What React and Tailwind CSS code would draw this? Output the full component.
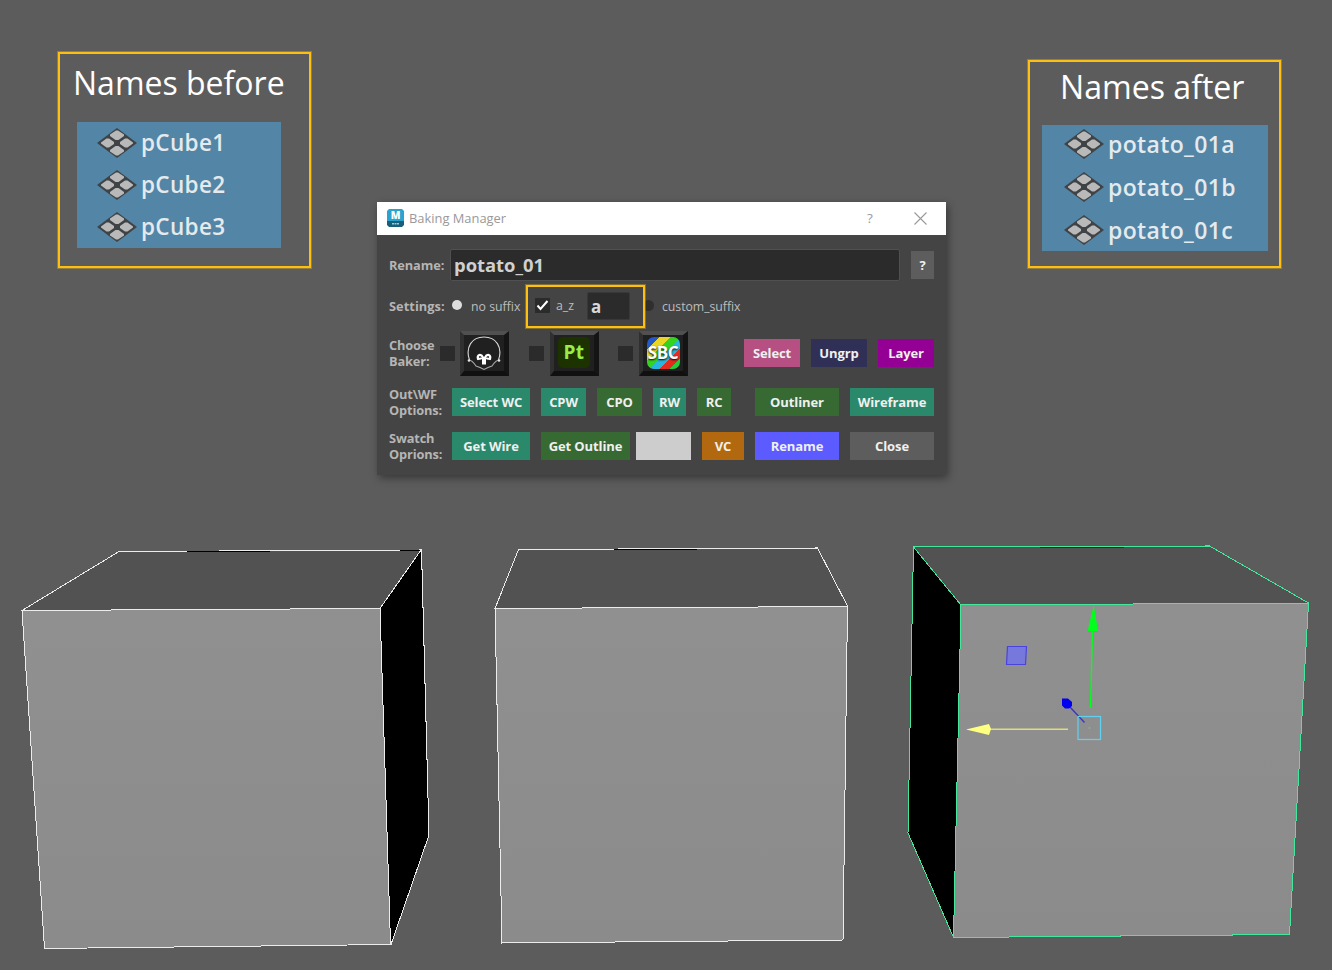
function PolyIcon() {
  return (
    <svg className="h-[30px] w-[42px] shrink-0" viewBox="0 0 42 30">
      <path d="M21 0 L41 15 L21 30 L1 15 Z" fill="#404346" />
      <g fill="#b9b9b9">
        <path d="M20 2.500 h2 l6 4 v1.500 l-5.500 4 h-3 l-5.500 -4 V6.500 Z" />
        <path d="M20 27.500 h2 l6 -4 v-1.500 l-5.500 -4 h-3 l-5.500 4 V23.500 Z" />
        <path d="M5 14.500 l5.500 -4 h2.500 l5 3.500 v2 l-5 3.500 h-2.500 l-5.500 -4 Z" />
        <path d="M37 14.500 l-5.500 -4 h-2.500 l-5 3.500 v2 l5 3.500 h2.500 l5.500 -4 Z" />
      </g>
    </svg>
  );
}

function OutlinerRow({ name, className }) {
  return (
    <div className={"flex items-center " + className}>
      <PolyIcon />
      <span className="ml-[3px] font-semibold leading-none tracking-[0.35px] text-[#e4eaed]">{name}</span>
    </div>
  );
}

function Face({ points, fill }) {
  return <polygon points={points} fill={fill} />;
}

function Viewport() {
  return (
    <svg className="absolute inset-0 h-[970px] w-[1332px]" viewBox="0 0 1332 970">
      <defs>
        <linearGradient id="front" x1="0" y1="0" x2="0" y2="1">
          <stop offset="0" stopColor="#909090" />
          <stop offset="1" stopColor="#8b8b8b" />
        </linearGradient>
      </defs>

      <g shapeRendering="crispEdges">
        <Face points="22,611 119,551.5 421,550 380,608.500" fill="#525252" />
        <Face points="380,608.500 421,550 429,835 391,944" fill="#000" />
        <Face points="22,611 380,608.500 391,944 44.500,948.500" fill="url(#front)" />
        <g fill="none" stroke="#ececec" strokeWidth="1">
          <path d="M22 610.500 L119 551.500 L421.500 550 L429 835 L391 944.500 L44.500 948.500 Z" />
          <path d="M22 610.500 L380 608.500 L421 550 M380 608.500 L390.500 944" />
        </g>
        <path d="M187 551.500 H270 M400 550.500 H420" stroke="#000" strokeWidth="1" />

        <Face points="518.500,549 817.500,548 847.500,606 495,608.500" fill="#525252" />
        <Face points="495,608.500 847.500,606 843,940 502,943.500" fill="url(#front)" />
        <g fill="none" stroke="#ececec" strokeWidth="1">
          <path d="M518.500 549.500 L817.500 548 L847.500 606 L843 940 L502 943 L495 608.500 Z" />
          <path d="M495 608.500 L847.500 606.500" />
        </g>
        <path d="M614 549.500 H697" stroke="#000" strokeWidth="1" />

        <Face points="913.500,547 1209.500,546 1308.500,603 961,605" fill="#525252" />
        <Face points="913.500,547 961,605 953.500,937.500 908,833" fill="#000" />
        <Face points="961,605 1308.500,603 1289,934 953.500,937.500" fill="url(#front)" />
        <g fill="none" stroke="#43e89d" strokeWidth="1">
          <path d="M913.500 547 L1209.500 546 L1308.500 603 L1289.500 934.500 L953.500 937.500 L908 833 Z" />
          <path d="M913.500 547 L961 605 L1308.500 603 M961 605 L953.500 937.500" />
        </g>
        <path d="M1040 547 H1124" stroke="#04301d" strokeWidth="1" />
      </g>

      <path d="M1090.500 708 L1092.500 630" stroke="#00ff1a" strokeWidth="1.400" />
      <path d="M1093.800 605 L1098 631 H1087.500 Z" fill="#00ff1a" />
      <path d="M1068 729.300 H989" stroke="#e0dc7c" strokeWidth="1.500" />
      <path d="M966 729.500 L989 724 L991 729 L989 735 Z" fill="#ffff80" />
      <path d="M1007.500 646.500 H1026.500 L1025.500 664.500 H1006.500 Z" fill="#7778dc" stroke="#4a44dc" strokeWidth="1.200" />
      <path d="M1069 706 L1084.500 722.500" stroke="#3c34c0" strokeWidth="1.400" />
      <path d="M1062 698.500 H1068 L1072 702 V706 L1069 708.500 H1065 L1062 705.500 Z" fill="#0000f0" />
      <rect x="1078" y="716.500" width="22.500" height="23" fill="none" stroke="#5ed2f0" strokeWidth="1.200" />
      <circle cx="1089.500" cy="728" r="1" fill="#7ab59a" />
    </svg>
  );
}

function Btn({ children, className }) {
  return (
    <button className={"flex h-7 shrink-0 items-center justify-center whitespace-nowrap text-[13px] font-bold leading-none tracking-[-0.1px] text-[#f0f0f0] " + className}>
      {children}
    </button>
  );
}

function RowLabel({ a, b }) {
  return (
    <div className="w-[63px] shrink-0 text-[12.800px] font-bold leading-[16.500px] tracking-[-0.15px] text-[#b5b5b5]">
      <div>{a}</div>
      <div>{b}</div>
    </div>
  );
}

function Check() {
  return <div className="size-[15px] shrink-0 bg-[#2b2b2b]" />;
}

function BakerTile({ children }) {
  return (
    <div className="flex h-[45px] w-[49px] shrink-0 items-center justify-center border-b-[5px] border-l-4 border-r-[5px] border-t-4 border-b-[#101010] border-l-[#303030] border-r-[#141414] border-t-[#505050] bg-[#202020]">
      {children}
    </div>
  );
}

function Skull() {
  return (
    <svg className="h-9 w-9 shrink-0" viewBox="0 0 36 36" fill="none">
      <path d="M3.500 25 C-1 12 6 2 18 2 C30 2 37 12 32.500 25" stroke="#d8d8d8" strokeWidth="1.100" />
      <path d="M3 25 C6 25 8 28 10 31 L14 32.500 L18 34.500 L22 32.500 L26 31 C28 28 30 25 33 25" stroke="#a8a8a8" strokeWidth="1.100" />
      <circle cx="3" cy="25.500" r="1.300" fill="#e5e5e5" />
      <circle cx="33" cy="25.500" r="1.300" fill="#e5e5e5" />
      <path d="M12 24 C10.500 19.500 15 18.500 17 22.500 M24 24 C25.500 19.500 21 18.500 19 22.500 M12 24 L15 23.500 M24 24 L21 23.500" stroke="#fff" strokeWidth="2.200" strokeLinecap="round" />
      <path d="M16 22 H20 V29.500 H16 Z" fill="#fff" />
    </svg>
  );
}

function Dialog() {
  return (
    <div className="absolute left-[377px] top-[202px] flex h-[273px] w-[569px] flex-col bg-[#444] shadow-[2px_3px_8px_rgba(0,0,0,0.400)]">
      <div className="flex h-[33px] shrink-0 items-center bg-white pl-[10px] text-[#999]">
        <svg className="mb-[1px] h-[18px] w-[17px] shrink-0" viewBox="0 0 17 18">
          <path d="M2 0 H15 L17 2 V12 H0 V2 Z" fill="#28a4cf" />
          <path d="M0 12 H17 V16 L15 18 H2 L0 16 Z" fill="#17607c" />
          <text x="8.500" y="10" fill="#fff" fontSize="10" fontWeight="800" textAnchor="middle">M</text>
          <path d="M5 14.800 H12" stroke="#9fc8d6" strokeWidth="1.500" strokeDasharray="2 .5" />
        </svg>
        <span className="ml-[5px] w-[458px] shrink-0 text-[12.900px]">Baking Manager</span>
        <span className="w-[10px] shrink-0 text-[13.500px]">?</span>
        <svg className="ml-[37px] size-[13px] shrink-0" viewBox="0 0 13 13" stroke="#999" strokeWidth="1.100"><path d="M.5 .5 L12.500 12.500 M12.500 .5 L.5 12.500" /></svg>
      </div>

      <div className="mt-[14px] flex h-8 shrink-0 items-center pl-3">
        <span className="w-[61px] shrink-0 pt-[1px] text-[12.800px] font-bold tracking-[-0.1px] text-[#b5b5b5]">Rename:</span>
        <div className="flex h-8 w-[450px] shrink-0 items-center rounded-[2px] border border-[#505050] bg-[#2b2b2b] pl-[3px] text-[18.400px] font-bold text-[#d0d0d0]">potato_01</div>
        <Btn className="ml-[11px] w-[23px] bg-[#5d5d5d]">?</Btn>
      </div>

      <div className="mt-[3px] flex h-[44px] shrink-0 items-center pl-3 text-[12.300px] text-[#bdbdbd]">
        <span className="w-[63px] shrink-0 pt-[2px] text-[12.800px] font-bold tracking-[0.05px] text-[#b5b5b5]">Settings:</span>
        <div className="mb-[2px] size-[10px] shrink-0 rounded-full bg-[#dedede]" />
        <span className="ml-[9px] w-[54px] shrink-0 whitespace-nowrap pt-[2px]">no suffix</span>
        <div className="z-10 mx-[1px] flex h-[43px] w-[119px] shrink-0 items-center border-2 border-[#fdc011] pl-[7px] shadow-[0_0_0_1px_rgba(253,192,17,0.350)]">
          <div className="mb-[2px] flex size-[15px] shrink-0 items-center justify-center bg-[#2b2b2b]">
            <svg className="size-[13px]" viewBox="0 0 13 13" fill="none" stroke="#fff" strokeWidth="2"><path d="M1.500 6.500 L4.500 10 L11.500 2" /></svg>
          </div>
          <span className="ml-[6px] w-[31px] shrink-0">a_z</span>
          <div className="flex h-7 w-[43px] shrink-0 items-center rounded-[2px] border border-[#383838] bg-[#2b2b2b] pl-[3px] pt-[1px] text-[17px] font-bold text-[#d8d8d8]">a</div>
        </div>
        <div className="mb-[2px] -ml-[3px] size-[11px] shrink-0 rounded-full bg-[#2f2f2f]" />
        <span className="ml-[8px] pt-[2px] tracking-[-0.05px]">custom_suffix</span>
      </div>

      <div className="mt-[1px] flex h-[48px] shrink-0 items-center pl-3">
        <div className="w-[51px] shrink-0"><RowLabel a="Choose" b="Baker:" /></div>
        <Check />
        <div className="ml-[5px]"><BakerTile><Skull /></BakerTile></div>
        <div className="ml-[20px]"><Check /></div>
        <div className="ml-[6px]">
          <BakerTile><div className="flex h-[31px] w-8 shrink-0 items-center justify-center rounded-[5px] bg-[#1c3300] text-[19px] font-bold leading-none tracking-[0.5px] text-[#98ec45]">Pt</div></BakerTile>
        </div>
        <div className="ml-[19px]"><Check /></div>
        <div className="ml-[6px]">
          <BakerTile><div className="flex h-8 w-[33px] shrink-0 items-center justify-center rounded-[7px] bg-[linear-gradient(135deg,#2359c9_0_20%,#e8d526_20%_36%,#34d321_36%_52%,#27b6dc_52%_68%,#e42b20_68%_84%,#28cb39_84%)] text-[17px] font-bold leading-none tracking-[-0.3px] text-white [text-shadow:0_1px_2px_#000]">SBC</div></BakerTile>
        </div>
        <Btn className="ml-[56px] w-14 bg-[#b65082]">Select</Btn>
        <Btn className="ml-[11px] w-14 bg-[#302f55]">Ungrp</Btn>
        <Btn className="ml-[11px] w-14 bg-[#930093]">Layer</Btn>
      </div>

      <div className="mt-[7px] flex h-[36px] shrink-0 items-center pl-3">
        <RowLabel a="Out\WF" b="Options:" />
        <Btn className="w-[78px] bg-[#2b896b]">Select WC</Btn>
        <Btn className="ml-[11px] w-[45px] bg-[#2b896b]">CPW</Btn>
        <Btn className="ml-[11px] w-[45px] bg-[#376a33]">CPO</Btn>
        <Btn className="ml-[11px] w-[33px] bg-[#2b896b]">RW</Btn>
        <Btn className="ml-[11px] w-[34px] bg-[#376a33]">RC</Btn>
        <Btn className="ml-[24px] w-[84px] bg-[#376a33]">Outliner</Btn>
        <Btn className="ml-[11px] w-[84px] bg-[#2b896b]">Wireframe</Btn>
      </div>

      <div className="mt-[8px] flex h-[36px] shrink-0 items-center pl-3">
        <RowLabel a="Swatch" b="Oprions:" />
        <Btn className="w-[78px] bg-[#2b896b]">Get Wire</Btn>
        <Btn className="ml-[11px] w-[89px] bg-[#376a33]">Get Outline</Btn>
        <div className="ml-[6px] h-7 w-[55px] bg-[#cdcdcd]" />
        <Btn className="ml-[11px] w-[42px] bg-[#b2680e]">VC</Btn>
        <Btn className="ml-[11px] w-[84px] bg-[#5b5bff]">Rename</Btn>
        <Btn className="ml-[11px] w-[84px] bg-[#5d5d5d]">Close</Btn>
      </div>
    </div>
  );
}

export default function App() {
  return (
    <div className="relative h-[970px] w-[1332px] overflow-hidden bg-[#5c5c5c] font-['Open_Sans',sans-serif]">
      <Viewport />

      <div className="absolute left-[58px] top-[52px] flex h-[216px] w-[253px] flex-col border-2 border-[#fdc011] pl-[17px] shadow-[0_0_0_1px_rgba(253,192,17,0.350)]">
        <h2 className="-ml-[4px] mt-[8px] h-[60px] whitespace-nowrap text-[32px] leading-[42px] text-white">Names before</h2>
        <div className="h-[126px] w-[204px] bg-[#5285a6] pl-[19px] text-[22.500px]">
          <OutlinerRow name="pCube1" className="h-[42px]" />
          <OutlinerRow name="pCube2" className="h-[42px]" />
          <OutlinerRow name="pCube3" className="h-[42px]" />
        </div>
      </div>

      <div className="absolute left-[1028px] top-[60px] flex h-[208px] w-[253px] flex-col border-2 border-[#fdc011] pl-[12px] shadow-[0_0_0_1px_rgba(253,192,17,0.350)]">
        <h2 className="ml-[18px] mt-[4px] h-[59px] whitespace-nowrap text-[32.100px] leading-[42px] text-white">Names after</h2>
        <div className="h-[126px] w-[226px] bg-[#5285a6] pl-[21px] text-[23px]">
          <OutlinerRow name="potato_01a" className="h-[38px]" />
          <OutlinerRow name="potato_01b" className="h-[48px]" />
          <OutlinerRow name="potato_01c" className="h-[38px]" />
        </div>
      </div>

      <Dialog />
    </div>
  );
}
